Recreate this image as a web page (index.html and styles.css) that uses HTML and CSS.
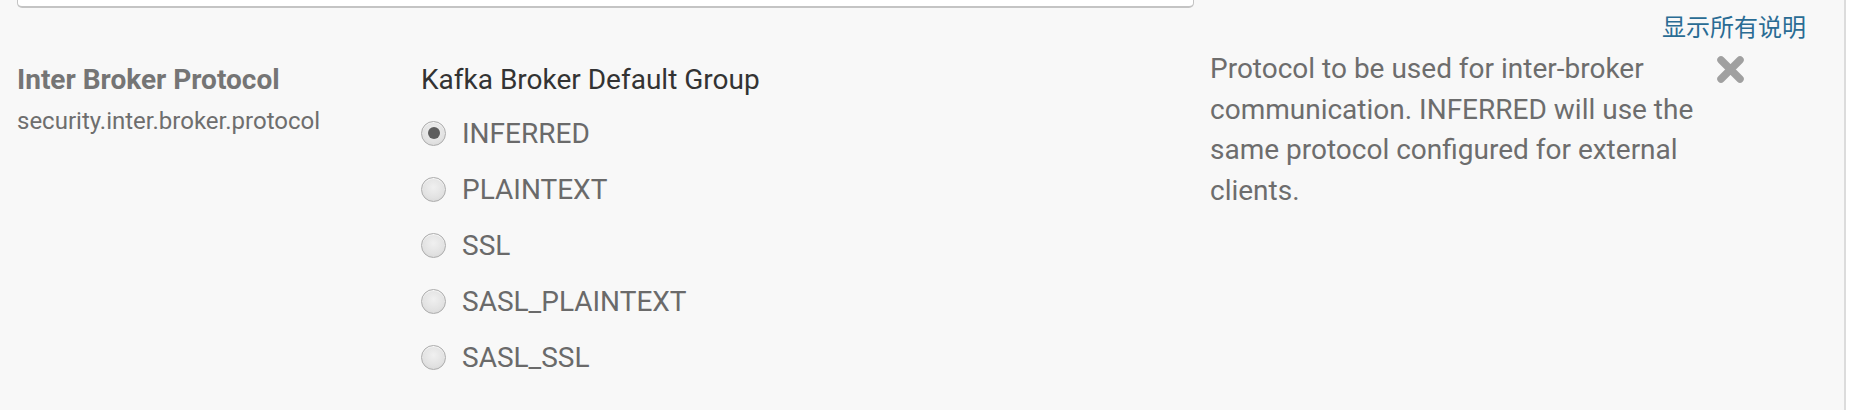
FILE: index.html
```html
<!DOCTYPE html>
<html lang="zh">
<head>
<meta charset="utf-8">
<title>Inter Broker Protocol</title>
<link rel="stylesheet" href="styles.css">
</head>
<body>
<div class="page">
  <div class="main">
    <div class="top-box"></div>
    <div class="toolbar">
      <a class="show-all" href="#">显示所有说明</a>
    </div>
    <div class="config-row">
      <div class="name-col">
        <div class="display-name">Inter Broker Protocol</div>
        <div class="prop-name">security.inter.broker.protocol</div>
      </div>
      <div class="control-col">
        <div class="group-name">Kafka Broker Default Group</div>
        <label class="radio-row"><input type="radio" name="proto" class="radio" checked><span class="radio-label">INFERRED</span></label>
        <label class="radio-row"><input type="radio" name="proto" class="radio"><span class="radio-label">PLAINTEXT</span></label>
        <label class="radio-row"><input type="radio" name="proto" class="radio"><span class="radio-label">SSL</span></label>
        <label class="radio-row"><input type="radio" name="proto" class="radio"><span class="radio-label">SASL_PLAINTEXT</span></label>
        <label class="radio-row"><input type="radio" name="proto" class="radio"><span class="radio-label">SASL_SSL</span></label>
      </div>
      <div class="desc-col">
        <p class="desc">Protocol to be used for inter-broker communication. INFERRED will use the same protocol configured for external clients.</p>
      </div>
      <div class="close-col">
        <svg class="close-icon" width="27" height="27" viewBox="0 0 27 27" aria-hidden="true">
          <path d="M4 4 L23 23 M23 4 L4 23" stroke="#a0a0a0" stroke-width="7.5" stroke-linecap="round" fill="none"/>
        </svg>
      </div>
    </div>
  </div>
  <div class="side"></div>
</div>
</body>
</html>
```

FILE: styles.css
```css
html, body {
  margin: 0;
  padding: 0;
  background: #ffffff;
}
body {
  font-family: Roboto, "Noto Sans CJK SC", "Liberation Sans", sans-serif;
  width: 1876px;
  height: 410px;
  overflow: hidden;
}
.page {
  display: flex;
  height: 410px;
}
.main {
  width: 1844px;
  height: 410px;
  background: #f8f8f8;
  border-right: 2px solid #dcdcdc;
  box-sizing: content-box;
}
.side {
  flex: 1;
  background: #ffffff;
}
.top-box {
  margin-left: 17px;
  width: 1175px;
  height: 6px;
  background: #ffffff;
  border: 1px solid #c4c4c4;
  border-top: none;
  border-bottom-width: 2px;
  border-radius: 0 0 5px 5px;
}
.toolbar {
  display: flex;
  justify-content: flex-end;
  padding-right: 38px;
  margin-top: 3px;
  height: 30px;
}
.show-all {
  font-family: "Noto Sans CJK SC", sans-serif;
  font-size: 24px;
  line-height: 30px;
  color: #2a6c94;
  text-decoration: none;
}
.config-row {
  display: flex;
  align-items: flex-start;
  padding-top: 24px;
}
.name-col {
  width: 421px;
  padding-left: 17px;
  box-sizing: border-box;
}
.display-name {
  font-weight: bold;
  font-size: 28px;
  line-height: 30px;
  color: #757575;
}
.prop-name {
  font-size: 24px;
  line-height: 30px;
  margin-top: 11px;
  color: #6e6e6e;
}
.control-col {
  width: 789px;
  display: flex;
  flex-direction: column;
}
.group-name {
  font-size: 28px;
  line-height: 30px;
  color: #333333;
  margin-bottom: 10px;
}
.radio-row {
  display: flex;
  align-items: center;
  height: 56px;
  gap: 16px;
}
.radio {
  appearance: none;
  -webkit-appearance: none;
  margin: 0;
  width: 25px;
  height: 25px;
  border-radius: 50%;
  border: 1px solid #acacac;
  background: radial-gradient(circle at 50% 40%, #f0f0f0 0%, #e2e2e2 60%, #d2d2d2 100%);
  box-shadow: inset 0 1px 1px rgba(255,255,255,0.8);
  box-sizing: border-box;
  display: flex;
  align-items: center;
  justify-content: center;
}
.radio:checked::after {
  content: "";
  width: 12px;
  height: 12px;
  border-radius: 50%;
  background: #5e5e5e;
}
.radio-label {
  font-size: 28px;
  color: #6a6a6a;
}
.desc-col {
  width: 500px;
}
.desc {
  margin: 0;
  font-size: 28px;
  line-height: 40.5px;
  color: #6d6d6d;
  margin-top: -16px;
}
.close-col {
  padding-left: 7px;
  margin-top: -9px;
}
.close-icon {
  display: block;
}
```
